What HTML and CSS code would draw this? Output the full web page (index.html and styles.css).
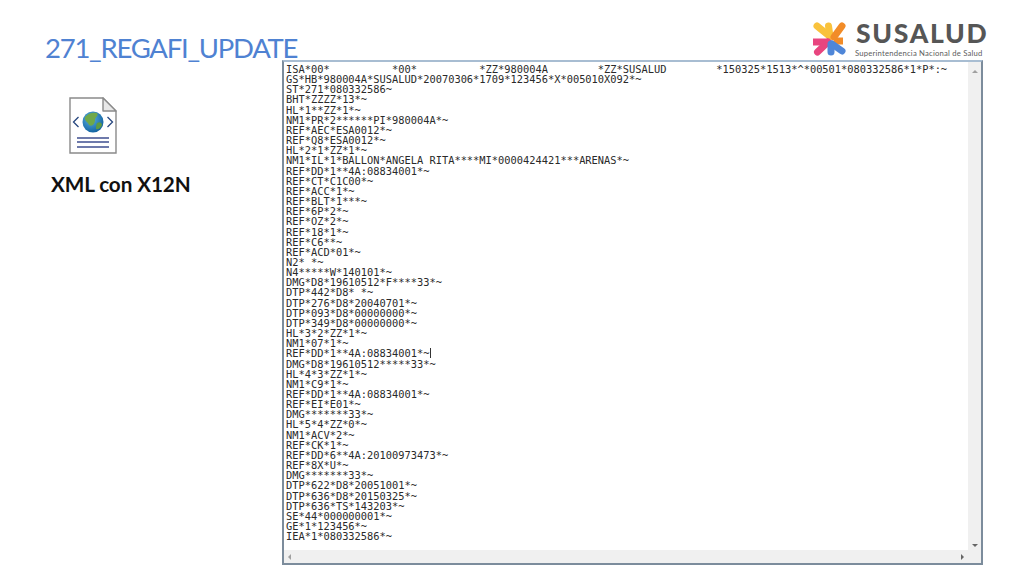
FILE: index.html
```html
<!DOCTYPE html>
<html lang="es">
<head>
<meta charset="utf-8">
<title>271_REGAFI_UPDATE</title>
<link rel="stylesheet" href="styles.css">
</head>
<body>
<div class="slide">
  <header class="top">
    <h1 class="title">271_REGAFI_UPDATE</h1>
    <div class="logo">
      <svg class="mark" viewBox="0 0 34 34" width="34" height="34" aria-hidden="true">
        <g fill="none" stroke-linecap="round" stroke-width="7">
          <path d="M4 4L17 14.500" stroke="#f9c23c"/>
          <path d="M15.500 4L17 14.500" stroke="#f9c23c"/>
          <path d="M30 19H21" stroke="#f28c28" stroke-linecap="butt"/>
          <path d="M29 4L21 15" stroke="#f28c28"/>
          <path d="M0 20H15" stroke="#e8457f" stroke-linecap="butt"/>
          <path d="M4.500 30L15 20" stroke="#e8457f"/>
          <path d="M18 30L18 22" stroke="#4f86d8"/>
          <path d="M29 29L19 22" stroke="#4f86d8"/>
        </g>
      </svg>
      <div class="brand">
        <div class="brand-name">SUSALUD</div>
        <div class="brand-sub">Superintendencia Nacional de Salud</div>
      </div>
    </div>
  </header>
  <main class="main">
    <aside class="side">
      <svg class="doc" viewBox="0 0 48 57" width="48" height="57" aria-hidden="true">
        <defs>
          <radialGradient id="sea" cx="40%" cy="35%" r="70%">
            <stop offset="0" stop-color="#5bb2e2"/>
            <stop offset="1" stop-color="#0f5f9e"/>
          </radialGradient>
        </defs>
        <path d="M1 1H34L47 14V56H1Z" fill="#fff" stroke="#8a8a8a" stroke-width="1.4"/>
        <path d="M34 1V14H47Z" fill="#e8e8e8" stroke="#8a8a8a" stroke-width="1.4" stroke-linejoin="round"/>
        <circle cx="24" cy="25" r="10.500" fill="url(#sea)"/>
        <path d="M16 20C19 16 24 15 28 16C30 19 26 20 26 23C26 27 23 30 20 28C19 25 15 24 16 20Z" fill="#6fa84a"/>
        <path d="M28 26C31 24 33 26 33 28C32 31 29 33 27 32C27 30 27 28 28 26Z" fill="#5f9b45"/>
        <path d="M9.500 20L4.500 25L9.500 30M38.500 20L43.500 25L38.500 30" fill="none" stroke="#27477f" stroke-width="1.300"/>
        <path d="M8 41H40M8 45H40M8 50H40" fill="none" stroke="#3f4f90" stroke-width="1.300"/>
      </svg>
      <p class="label">XML con X12N</p>
    </aside>
    <section class="window">
      <div class="window-body">
<pre class="edi">ISA*00*          *00*          *ZZ*980004A        *ZZ*SUSALUD        *150325*1513*^*00501*080332586*1*P*:~
GS*HB*980004A*SUSALUD*20070306*1709*123456*X*005010X092*~
ST*271*080332586~
BHT*ZZZZ*13*~
HL*1**ZZ*1*~
NM1*PR*2******PI*980004A*~
REF*AEC*ESA0012*~
REF*Q8*ESA0012*~
HL*2*1*ZZ*1*~
NM1*IL*1*BALLON*ANGELA RITA****MI*0000424421***ARENAS*~
REF*DD*1**4A:08834001*~
REF*CT*C1C00*~
REF*ACC*1*~
REF*BLT*1***~
REF*6P*2*~
REF*OZ*2*~
REF*18*1*~
REF*C6**~
REF*ACD*01*~
N2* *~
N4*****W*140101*~
DMG*D8*19610512*F****33*~
DTP*442*D8* *~
DTP*276*D8*20040701*~
DTP*093*D8*00000000*~
DTP*349*D8*00000000*~
HL*3*2*ZZ*1*~
NM1*07*1*~
REF*DD*1**4A:08834001*~<span class="caret"></span>
DMG*D8*19610512*****33*~
HL*4*3*ZZ*1*~
NM1*C9*1*~
REF*DD*1**4A:08834001*~
REF*EI*E01*~
DMG*******33*~
HL*5*4*ZZ*0*~
NM1*ACV*2*~
REF*CK*1*~
REF*DD*6**4A:20100973473*~
REF*8X*U*~
DMG*******33*~
DTP*622*D8*20051001*~
DTP*636*D8*20150325*~
DTP*636*TS*143203*~
SE*44*000000001*~
GE*1*123456*~
IEA*1*080332586*~</pre>
        <div class="vbar">
          <span class="arrow arrow-up"></span>
          <span class="arrow arrow-down"></span>
        </div>
      </div>
      <div class="hrow">
        <div class="hbar">
          <span class="arrow arrow-left"></span>
          <span class="arrow arrow-right"></span>
        </div>
        <div class="corner"></div>
      </div>
    </section>
  </main>
</div>
</body>
</html>
```

FILE: styles.css
```css
* { box-sizing: border-box; }
html, body { margin: 0; padding: 0; background: #fff; }
.slide { width: 1024px; height: 576px; overflow: hidden; display: flex; flex-direction: column; }

.top { height: 60px; display: flex; justify-content: space-between; align-items: flex-start; padding-left: 45px; padding-right: 38px; }
.title { margin: 30px 0 0; font: 400 27.5px/36px Lato, "Open Sans", sans-serif; color: #4f82d2; white-space: nowrap; letter-spacing: -1.25px; height: 36px; }

.logo { display: flex; gap: 8px; margin-top: 22px; }
.mark { display: block; flex: none; }
.brand { display: flex; flex-direction: column; width: 131px; }
.brand-name { font: 900 26.5px/22px Lato, sans-serif; color: #565656; letter-spacing: 1.7px; white-space: nowrap; margin-left: 1px; }
.brand-sub { font: 400 7.7px/9px Lato, sans-serif; color: #5d5d5d; white-space: nowrap; margin-top: 5px; letter-spacing: 0.2px; }

.main { display: flex; flex: none; height: 505px; }
.side { width: 282px; flex: none; padding-left: 69px; padding-top: 37px; }
.doc { display: block; }
.label { margin: 18px 0 0 -18px; font: 700 20.7px/24px Lato, sans-serif; color: #111; white-space: nowrap; letter-spacing: -0.1px; }

.window { width: 701px; height: 505px; flex: none; display: flex; flex-direction: column; border: 2px solid #7c8c9c; border-top-color: #a8bdd2; background: #fff; position: relative; z-index: 1; }
.window-body { flex: 1; display: flex; min-height: 0; }
.edi { flex: 1; margin: 0; padding: 2px 0 0 2px; font: 10.36px/10.15px "DejaVu Sans Mono", monospace; color: #2a2a2a; overflow: hidden; }
.caret { display: inline-block; width: 1px; height: 10px; background: #333; vertical-align: -1px; margin-left: 1px; }

.vbar { width: 13px; flex: none; background: #f0f0f0; display: flex; flex-direction: column; justify-content: space-between; align-items: center; padding: 8px 0 3px; }
.hrow { height: 13px; flex: none; display: flex; }
.hbar { flex: 1; background: #f0f0f0; display: flex; justify-content: space-between; align-items: center; padding: 0 4px; }
.corner { width: 13px; flex: none; background: #f0f0f0; }

.arrow { display: block; width: 0; height: 0; border-style: solid; border-color: transparent; }
.arrow-up { border-width: 0 3px 3px; border-bottom-color: #a0a0a0; }
.arrow-down { border-width: 3px 3px 0; border-top-color: #666; }
.arrow-left { border-width: 3px 3px 3px 0; border-right-color: #a0a0a0; }
.arrow-right { border-width: 3px 0 3px 3px; border-left-color: #666; }
```
